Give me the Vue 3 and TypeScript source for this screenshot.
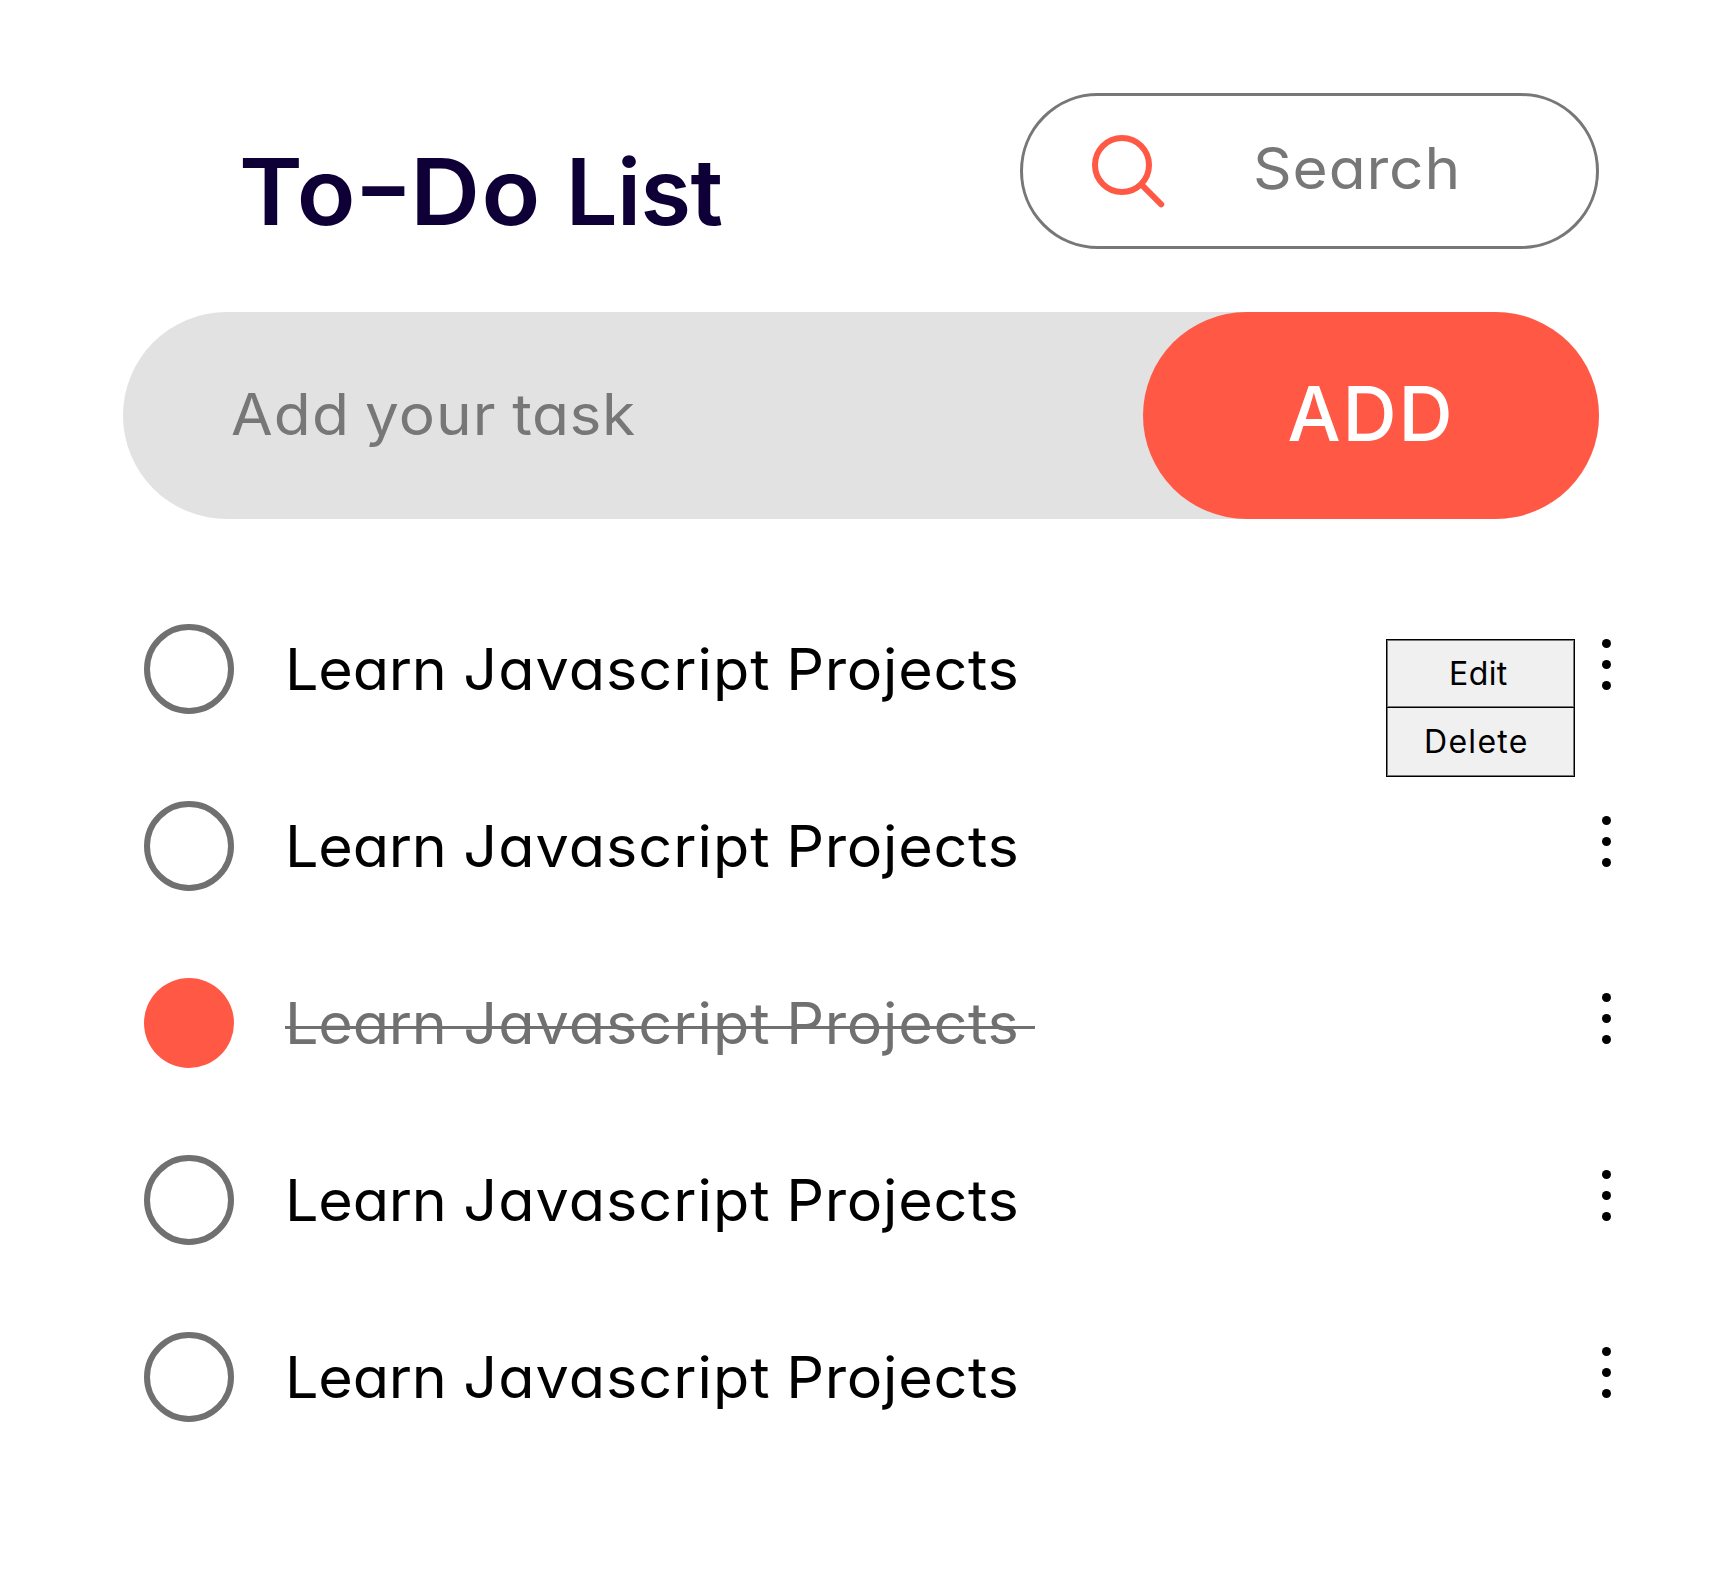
<script setup lang="ts">
import { ref } from 'vue'

interface Task {
  id: number
  done: boolean
  menuOpen: boolean
}

const tasks = ref<Task[]>([
  { id: 1, done: false, menuOpen: true },
  { id: 2, done: false, menuOpen: false },
  { id: 3, done: true, menuOpen: false },
  { id: 4, done: false, menuOpen: false },
  { id: 5, done: false, menuOpen: false },
])
</script>

<template>
  <main class="todo">
    <header class="top">
      <h1 class="title"><span class="w-todo">To<span class="dash">-</span>Do</span> <span class="w-list">List</span></h1>
      <div class="search">
        <svg class="search-icon" width="76" height="76" viewBox="0 0 76 76" fill="none" stroke="#ff5945">
          <circle cx="32" cy="32" r="27" stroke-width="6" />
          <path d="M53 53.2 71.2 71.4" stroke-width="6" stroke-linecap="round" />
        </svg>
        <span class="search-text">Search</span>
      </div>
    </header>

    <div class="entry">
      <span class="entry-text"><span class="w-add">Add</span> <span class="w-your">your</span> <span class="w-task">task</span></span>
      <button class="add" type="button">ADD</button>
    </div>

    <ul class="list">
      <li v-for="task in tasks" :key="task.id" class="row" :class="{ done: task.done }">
        <span class="check" @click="task.done = !task.done"></span>
        <span class="label"><span class="words"><span class="w-learn">Learn</span> <span class="w-js">Javascript</span> <span class="w-projects">Projects</span></span></span>
        <div v-if="task.menuOpen" class="menu">
          <div class="item edit">Edit</div>
          <div class="item delete">Delete</div>
        </div>
        <svg class="dots" width="9" height="51" viewBox="0 0 9 51" @click="task.menuOpen = !task.menuOpen">
          <circle cx="4.5" cy="4.5" r="4.5" />
          <circle cx="4.5" cy="25.5" r="4.5" />
          <circle cx="4.5" cy="46.5" r="4.5" />
        </svg>
      </li>
    </ul>
  </main>
</template>

<style>
body {
  margin: 0;
  background: #fff;
}
</style>

<style scoped>
.todo {
  box-sizing: border-box;
  width: 1713px;
  height: 1590px;
  padding: 93px 114px 0 123px;
  overflow: hidden;
  font-family: Inter, "Open Sans", sans-serif;
  font-feature-settings: "cv11" 1;
  font-size: 57px;
  white-space: nowrap;
  color: #000;
}
.top {
  display: flex;
  justify-content: space-between;
  height: 156px;
}
.title {
  margin: 0;
  padding: 39px 0 0 116px;
  font-size: 92px;
  line-height: 120px;
  font-weight: 600;
  color: #0e0036;
}
.w-todo {
  display: inline-block;
  letter-spacing: 1.4px;
  transform: scaleX(1.05);
  transform-origin: left;
}
.dash {
  display: inline-block;
  letter-spacing: 0;
  margin: 0 4px;
  transform: translateY(-6px) scaleX(1.33);
}
.w-list { letter-spacing: -0.6px; margin-left: 15px; }
.search {
  box-sizing: border-box;
  width: 579px;
  height: 156px;
  display: flex;
  align-items: flex-start;
  border: 3px solid #777;
  border-radius: 78px;
  color: #777;
}
.search-icon { margin: 37px 0 0 67px; flex: none; }
.search-text {
  margin: 35px 0 0 87px;
  line-height: 76px;
  letter-spacing: 0.8px;
  transform: scaleX(1.06);
  transform-origin: left;
}
.entry {
  display: flex;
  justify-content: space-between;
  height: 207px;
  margin-top: 63px;
  border-radius: 103.5px;
  background: #e2e2e2;
  color: #777;
}
.entry-text {
  margin-left: 108px;
  line-height: 206px;
  transform: scaleX(1.06);
  transform-origin: left;
}
.w-add { letter-spacing: 1.1px; }
.w-your { letter-spacing: 0.9px; margin-left: -2px; }
.w-task { letter-spacing: 0.5px; margin-left: -1px; }
.add {
  width: 456px;
  height: 207px;
  padding: 0 0 4px 0;
  border: 0;
  border-radius: 103.5px;
  background: #ff5945;
  color: #fff;
  font: inherit;
  font-feature-settings: inherit;
  font-size: 75px;
  font-weight: 500;
  letter-spacing: 1.9px;
}
.list {
  margin: 105px 0 0;
  padding: 0 0 0 21px;
  list-style: none;
}
.row {
  position: relative;
  display: flex;
  height: 90px;
  margin-bottom: 87px;
}
.check {
  box-sizing: border-box;
  width: 90px;
  height: 90px;
  flex: none;
  border: 6px solid #707070;
  border-radius: 50%;
}
.done .check { border: 0; background: #ff5945; }
.label {
  position: relative;
  width: 750px;
  margin-left: 51px;
  line-height: 92px;
}
.words {
  display: inline-block;
  transform: scaleX(1.04);
  transform-origin: left;
}
.w-learn { letter-spacing: -0.2px; }
.w-js { letter-spacing: 1px; }
.w-projects { letter-spacing: 0.7px; margin-left: -1.2px; }
.done .label { color: #707070; }
.done .label::after {
  content: "";
  position: absolute;
  left: 0;
  top: 48px;
  width: 750px;
  height: 3px;
  background: #707070;
}
.dots { margin: 15px -12px 0 auto; flex: none; }
.menu {
  position: absolute;
  left: 1242px;
  top: 15px;
  box-sizing: border-box;
  width: 189px;
  height: 138px;
  border: 1px solid #000;
  box-shadow: inset 0 0 0 1px #777;
  background: #f0f0f0;
  font-size: 32px;
}
.item { box-sizing: border-box; line-height: 67px; }
.edit {
  height: 68px;
  padding-left: 62px;
  border-bottom: 1px solid #000;
  box-shadow: inset 0 -1px #777;
  letter-spacing: 0.4px;
}
.delete { padding-left: 37px; line-height: 68px; letter-spacing: 1.3px; }
</style>
